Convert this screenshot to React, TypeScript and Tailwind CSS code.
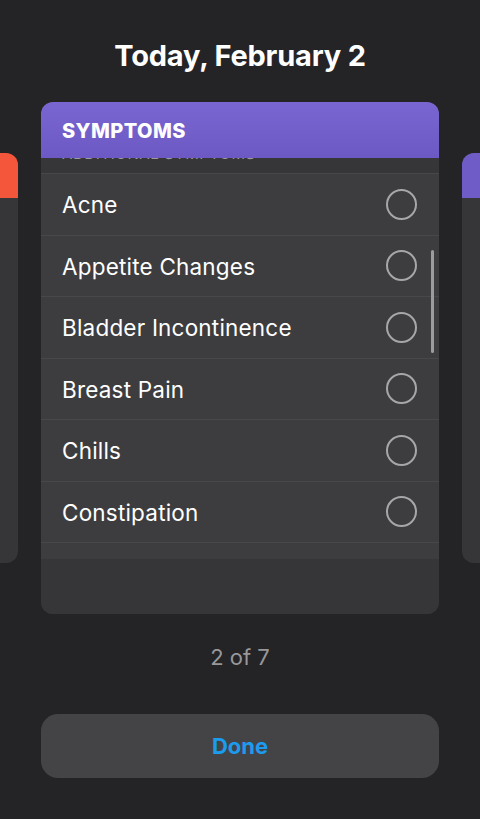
import React from 'react';

const symptoms = ['Acne', 'Appetite Changes', 'Bladder Incontinence', 'Breast Pain', 'Chills', 'Constipation'];

// Peeking neighbour card in the carousel
function SideCard({ color }: { color: string }) {
  return (
    <div className="w-[398px] h-[410px] shrink-0 rounded-[12px] overflow-hidden bg-[#363638] flex flex-col">
      <div className={`h-[45px] ${color}`} />
    </div>
  );
}

function SymptomRow({ label }: { label: string }) {
  return (
    <div className="h-[61.5px] shrink-0 flex items-center justify-between pl-[21px] pr-[22px] border-b border-[#48484a] bg-[#3d3d3f]">
      <span className="text-[22.5px] text-white tracking-[0.2px] pt-[2px]">{label}</span>
      <span className="w-[31px] h-[31px] rounded-full border-2 border-[#a7a7a9]" />
    </div>
  );
}

export default function App() {
  return (
    <div
      className="w-[480px] h-[819px] bg-[#242426] flex flex-col items-center overflow-hidden"
      style={{ fontFamily: 'Inter, "Noto Sans", sans-serif' }}
    >
      <h1 className="mt-[37px] h-[38px] text-[29px] leading-[38px] font-bold text-white tracking-[-0.2px]">
        Today, February 2
      </h1>

      {/* Carousel */}
      <div className="mt-[27px] w-[480px] flex justify-center items-center gap-[23px]">
        <SideCard color="bg-[#f3563a]" />

        <div className="w-[398px] h-[512px] shrink-0 rounded-[12px] overflow-hidden bg-[#363638] flex flex-col">
          <div className="h-[56px] shrink-0 bg-gradient-to-b from-[#7966d2] to-[#6c59c3] flex items-center px-[21px] pt-[1px]">
            <span className="text-[20px] font-extrabold text-white tracking-[0.4px]">SYMPTOMS</span>
          </div>

          <div className="relative flex-1 overflow-hidden flex flex-col">
            {/* section header scrolled mostly out of view */}
            <div className="h-[16px] shrink-0 bg-[#363638] border-b border-[#48484a] overflow-hidden relative">
              <span className="absolute left-[21px] top-[-12px] text-[15px] leading-[15px] text-[#9a9a9c] tracking-[0.6px]">
                ADDITIONAL SYMPTOMS
              </span>
            </div>
            {symptoms.map((s) => (
              <SymptomRow key={s} label={s} />
            ))}
            <div className="h-[16px] shrink-0 bg-[#3d3d3f]" />
            <div className="flex-1 bg-[#363638]" />

            {/* scroll indicator */}
            <div className="absolute right-[5px] top-[92px] w-[3px] h-[103px] rounded-full bg-[#9c9c9e]" />
          </div>
        </div>

        <SideCard color="bg-[#6f5cc7]" />
      </div>

      <div className="mt-[30px] text-[22px] leading-[26px] text-[#98989a]">2 of 7</div>

      <button className="mt-[44px] w-[398px] h-[64px] rounded-[17px] bg-[#444446] text-[22px] font-bold text-[#1c9bef]">
        Done
      </button>
    </div>
  );
}
